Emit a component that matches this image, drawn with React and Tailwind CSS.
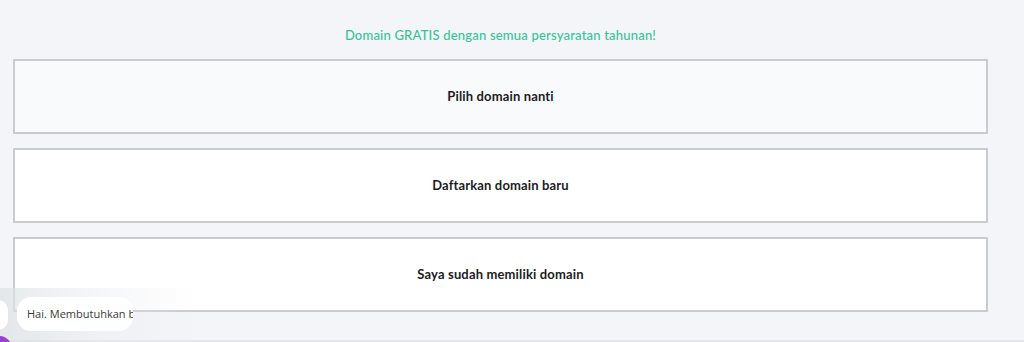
export default function App() {
  const cards = [
    { label: "Pilih domain nanti", bg: "bg-[#f9fafc]" },
    { label: "Daftarkan domain baru", bg: "bg-white" },
    { label: "Saya sudah memiliki domain", bg: "bg-white" },
  ];
  return (
    <div
      className="relative w-[1024px] h-[342px] overflow-hidden bg-[#f4f5f9]"
      style={{ fontFamily: "Lato, 'Open Sans', sans-serif" }}
    >
      <div className="pl-[13px] pr-[36px] pt-[27px]">
        <p className="text-center text-[13px] leading-[16px] font-medium text-[#35c496] tracking-[0.2px]">
          Domain GRATIS dengan semua persyaratan tahunan!
        </p>
        <div className="mt-[16px] flex flex-col gap-[14px]">
          {cards.map((c) => (
            <div
              key={c.label}
              className={`h-[75px] flex items-center justify-center border-2 border-[#c9cbd0] ${c.bg}`}
            >
              <span className="text-[13px] font-bold tracking-[0.15px] text-[#1c1c1e]">{c.label}</span>
            </div>
          ))}
        </div>
      </div>
      <div className="absolute left-0 right-0 bottom-0 h-[2px] bg-[#e6e7ec]" />
      <div className="absolute left-0 top-[288px] w-[200px] h-[54px] bg-gradient-to-r from-[#dde2e3]/70 via-[#e8eaee]/40 to-transparent" />
      <div className="absolute left-[-12px] top-[300px] w-[20px] h-[30px] rounded-full bg-white" />
      <div className="absolute left-[17px] top-[297px] w-[116px] h-[34px] rounded-[14px] bg-white overflow-hidden flex items-center pl-[10px]">
        <span
          className="whitespace-nowrap text-[11px] text-[#3a3a3a]"
          style={{ fontFamily: "'Open Sans', sans-serif" }}
        >
          Hai. Membutuhkan bantuan?
        </span>
      </div>
      <div className="absolute left-[-14px] top-[336px] w-[26px] h-[26px] rounded-full bg-[#9b3fd6]" />
    </div>
  );
}
